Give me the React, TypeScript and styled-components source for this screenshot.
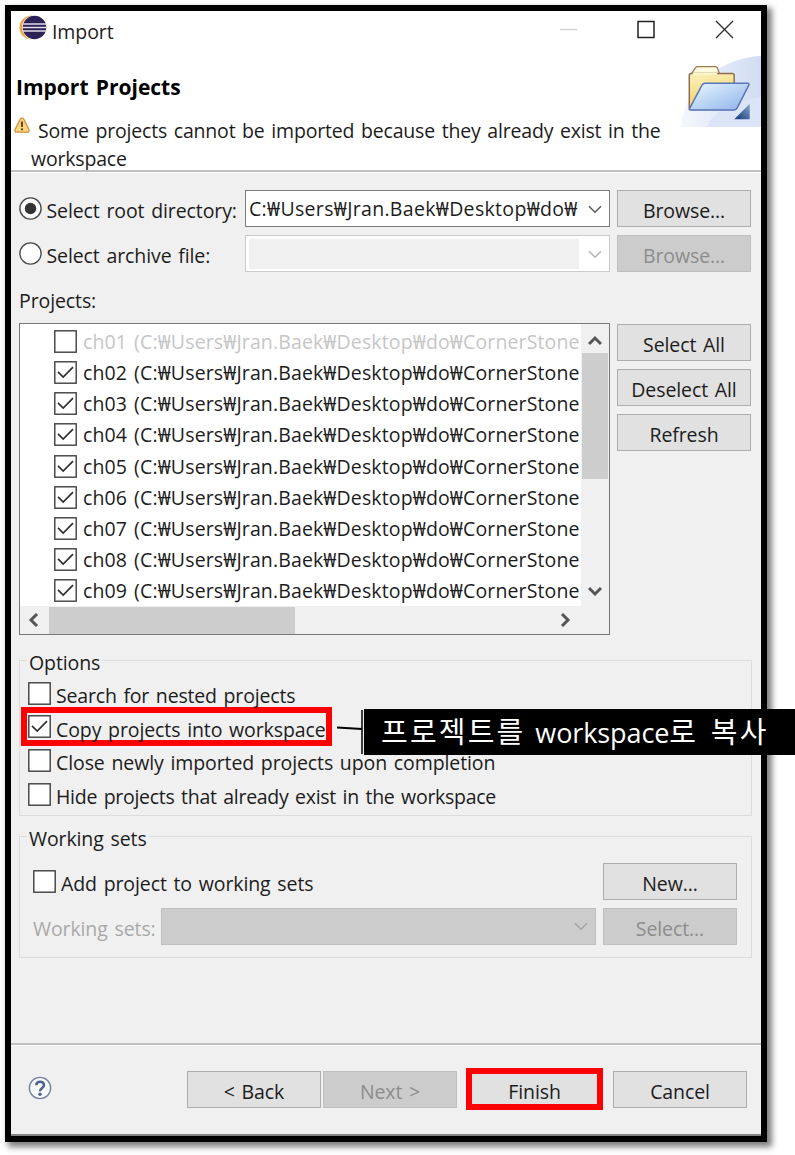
import React from 'react';
import styled, { createGlobalStyle, css } from 'styled-components';

const GlobalStyle = createGlobalStyle`
  *, *::before, *::after { box-sizing: border-box; }
  html, body { margin: 0; padding: 0; background: #fff; overflow: hidden; }
  body {
    font-family: "Open Sans", "Noto Sans", "Noto Sans CJK KR", sans-serif;
    font-size: 19.5px;
    line-height: 28px;
    color: #1c1c1c;
    letter-spacing: -0.1px;
    word-spacing: 1.8px;
  }
`;

const Page = styled.main`
  position: relative;
  width: 795px;
  height: 1155px;
  padding: 5px 0 0 5px;
  overflow: hidden;
`;

const Frame = styled.section`
  width: 762px;
  height: 1137px;
  border: 6px solid #000;
  background: #f0f0f0;
  box-shadow: 4px 4px 6px 1px rgba(0, 0, 0, 0.5);
  display: flex;
  flex-direction: column;
`;

const TitleBar = styled.header`
  height: 42px;
  flex: none;
  display: flex;
  align-items: flex-start;
  background: #fff;
  padding: 4px 27px 0 8px;
`;

const Title = styled.span`
  margin: 3px auto 0 5px;
`;

const WindowControls = styled.div`
  display: flex;
  gap: 60px;
  padding-top: 5px;
`;

const Banner = styled.div`
  height: 117px;
  flex: none;
  display: flex;
  justify-content: space-between;
  background: #fff;
`;

const BannerText = styled.div`
  padding: 20px 0 0 3px;
`;

const Heading = styled.h1`
  margin: 0 0 0 2px;
  font-size: 21px;
  line-height: 28px;
  font-weight: 700;
  color: #000;
  letter-spacing: 0;
`;

const Message = styled.p`
  margin: 16px 0 0;
  display: flex;
  letter-spacing: -0.18px;
`;

const MessageText = styled.span`
  text-indent: 7px;
  width: 650px;
`;

const Divider = styled.hr`
  flex: none;
  height: 3px;
  margin: 0;
  border: 0;
  border-top: 2px solid #c0c0c0;
  background: #fff;
`;

const Body = styled.div`
  height: 870px;
  flex: none;
  padding: 17px 9px 0 8px;
`;

const SourceRow = styled.div`
  display: grid;
  grid-template-columns: 226px 365px 134px;
  column-gap: 0;
  height: 37px;
  margin-bottom: 8px;
  & > :last-child { margin-left: 7px; }
`;

const RadioLabel = styled.div`
  display: flex;
  align-items: flex-start;
  gap: 5px;
  span { padding-top: 7px; white-space: nowrap; }
  svg { margin: 7px 0 0 -0.5px; }
`;

const Combo = styled.div<{ $off?: boolean }>`
  display: flex;
  align-items: center;
  justify-content: space-between;
  height: 37px;
  border: 1px solid ${p => (p.$off ? '#cbcbcb' : '#7c7c7c')};
  background: #fff;
  padding: 3px 7px 2px 3px;
  letter-spacing: 0.32px;
  white-space: nowrap;
`;

const ComboField = styled.span`
  flex: 1;
  align-self: stretch;
  margin-right: 9px;
  background: #f0f0f0;
`;

const Button = styled.button<{ $off?: boolean; $marked?: boolean }>`
  width: 134px;
  height: 37px;
  flex: none;
  font: inherit;
  letter-spacing: inherit;
  word-spacing: inherit;
  white-space: nowrap;
  padding: 4px 0 0;
  line-height: 28px;
  color: ${p => (p.$off ? '#8d8d8d' : '#1c1c1c')};
  background: ${p => (p.$off ? '#cccccc' : '#e1e1e1')};
  border: 1px solid ${p => (p.$off ? '#bfbfbf' : '#adadad')};
  ${p =>
    p.$marked &&
    css`
      width: 137px;
      height: 42px;
      border: 6px solid #ff0000;
      padding-top: 4px;
    `}
`;

const FieldLabel = styled.div`
  height: 28px;
  margin: 15px 0 8px;
`;

const ProjectsArea = styled.div`
  display: flex;
  gap: 7px;
  height: 312px;
`;

const ListBox = styled.div`
  width: 591px;
  height: 312px;
  border: 1px solid #777;
  background: #f0f0f0;
  display: grid;
  grid-template-columns: 561px 1fr;
  grid-template-rows: 282px 1fr;
`;

const ListItems = styled.ul`
  list-style: none;
  margin: 0;
  padding: 2px 0 0 34px;
  background: #fff;
  overflow: hidden;
`;

const ListItem = styled.li<{ $off?: boolean }>`
  display: flex;
  gap: 6px;
  height: 31.15px;
  white-space: nowrap;
  color: ${p => (p.$off ? '#c6c6c6' : '#1c1c1c')};
  letter-spacing: 0.13px;
  svg { margin-top: 4px; flex: none; }
  span { padding-top: 2px; }
`;

const VScroll = styled.div`
  display: flex;
  flex-direction: column;
  align-items: center;
  svg { margin: 10px 0 5px; flex: none; }
`;

const VThumb = styled.div`
  flex: none;
  width: 26px;
  height: 126px;
  margin-bottom: 95px;
  background: #cdcdcd;
`;

const HScroll = styled.div`
  display: flex;
  align-items: center;
  justify-content: space-between;
  padding: 0 9px 0 7px;
`;

const HThumb = styled.div`
  width: 246px;
  height: 27px;
  margin: 0 auto 0 8px;
  background: #cdcdcd;
`;

const SideButtons = styled.div`
  display: flex;
  flex-direction: column;
  gap: 8px;
  padding-top: 1px;
`;

const Group = styled.fieldset<{ $height: number; $top: number }>`
  min-width: 0;
  width: 733px;
  height: ${p => p.$height}px;
  margin: ${p => p.$top}px 0 0;
  padding: 0 0 0 8px;
  border: 1px solid #dcdcdc;
`;

const Legend = styled.legend`
  margin-left: -1px;
  padding: 0 2px;
  height: 28px;
  line-height: 34px;
`;

const OptionList = styled.div`
  padding-top: 8px;
`;

const CheckRow = styled.label<{ $red?: boolean; $tracking?: number }>`
  display: flex;
  gap: 5px;
  height: 33.5px;
  white-space: nowrap;
  letter-spacing: ${p => p.$tracking ?? -0.1}px;
  svg { flex: none; }
  ${p =>
    p.$red &&
    css`
      width: 311px;
      height: 39px;
      margin: -9px 0 3.5px -7px;
      padding: 1px 0 0 1px;
      border: 6px solid #ff0000;
      svg { margin-top: 1px; }
      span { margin-top: 2px; }
    `}
`;

const SetGrid = styled.div`
  display: grid;
  grid-template-columns: 128px 442px 134px;
  grid-template-rows: 37px 37px;
  row-gap: 8px;
  padding: 13px 0 0 5px;
`;

const AddSet = styled.div`
  grid-column: 1 / 3;
  display: flex;
  gap: 5px;
  svg { margin-top: 7px; }
  span { padding-top: 7px; }
`;

const SetLabel = styled.span`
  padding-top: 7px;
  color: #a9a9a9;
  white-space: nowrap;
`;

const SetCombo = styled.div`
  margin-right: 7px;
  display: flex;
  align-items: center;
  justify-content: flex-end;
  padding-right: 7px;
  border: 1px solid #bfbfbf;
  background: #cccccc;
`;

const Footer = styled.footer`
  flex: 1;
  display: flex;
  align-items: flex-start;
  padding: 25px 14px 0 17px;
  border-bottom: 2px solid #858585;
`;

const HelpSlot = styled.div`
  width: 159px;
  padding-top: 5px;
`;

const ButtonRow = styled.div`
  display: flex;
  gap: 2px;
  & > :nth-child(3) { margin: -3px 8px 0 7px; }
`;

const Callout = styled.aside`
  position: absolute;
  left: 337px;
  top: 709px;
  display: flex;
`;

const CalloutText = styled.div`
  width: 431px;
  height: 46px;
  padding: 4px 0 0 17px;
  background: #000;
  color: #fff;
  font-size: 27px;
  line-height: 40px;
  letter-spacing: -0.1px;
  word-spacing: 3px;
  white-space: nowrap;
`;

const Hangul = styled.span`
  font-family: "Noto Sans CJK KR", sans-serif;
  font-size: 29px;
  font-weight: 400;
  letter-spacing: 2.2px;
  word-spacing: 4px;
  line-height: 30px;
`;

const EclipseIcon = () => (
  <svg width="28" height="27" viewBox="0 0 28 27">
    <circle cx="12.5" cy="12.5" r="12" fill="#f7a13c" />
    <circle cx="15.8" cy="12.5" r="12.6" fill="#fff" />
    <circle cx="15.5" cy="12.5" r="11.8" fill="#2c2255" />
    <path d="M3.5 9h24M3 12.5h25M3.5 16h24" stroke="#dedbea" strokeWidth="1.5" />
  </svg>
);

const WarningIcon = () => (
  <svg width="17" height="18" viewBox="0 0 17 18">
    <path d="M8 0.8c1 0 1.5.8 2 1.8l4.8 9.6c.8 1.7 0 3-1.6 3H2.8c-1.6 0-2.4-1.3-1.6-3L6 2.6c.5-1 1-1.8 2-1.8z" fill="#fbd77c" stroke="#cf9440" strokeWidth="1.3" />
    <path d="M8 4.5v5.5" stroke="#4f3d1d" strokeWidth="1.8" />
    <circle cx="8" cy="12.3" r="1.1" fill="#4f3d1d" />
  </svg>
);

const FolderArt = () => (
  <svg width="82" height="75" viewBox="0 0 82 75">
    <defs>
      <linearGradient id="glow" x1="0" x2="1"><stop offset="0" stopColor="#f4f7fd" /><stop offset="1" stopColor="#d0dcf3" /></linearGradient>
      <linearGradient id="back" x1="0" y1="0" x2="0.3" y2="1"><stop offset="0" stopColor="#fcf3c0" /><stop offset="1" stopColor="#f0cf64" /></linearGradient>
      <linearGradient id="front" x1="0" y1="0" x2="1" y2="1"><stop offset="0" stopColor="#e9f8ff" /><stop offset="1" stopColor="#8db1ea" /></linearGradient>
      <linearGradient id="corner" x1="0" y1="1" x2="1" y2="0"><stop offset="0.2" stopColor="#264a86" /><stop offset="1" stopColor="#8ba9d3" /></linearGradient>
    </defs>
    <path d="M0 75C4 34 36 6 82 2v73z" fill="url(#glow)" />
    <path d="M26 75C36 55 59 49 82 44v31z" fill="#dce5f7" />
    <path d="M10.5 20.5l4.5-6.5c.5-.8 1-1 2-1h18c1 0 1.7.3 2.2 1l2.3 6.5" fill="#fffbe0" stroke="#9a7a52" strokeWidth="1.3" />
    <path d="M8.5 22V57h46V22c0-1.3-.7-2-2-2h-42c-1.3 0-2 .7-2 2z" fill="url(#back)" stroke="#8d6c4b" strokeWidth="1.5" strokeLinejoin="round" />
    <path d="M12 20.5h25" stroke="#fff7cc" strokeWidth="2" />
    <path d="M24.500 30h44c1 0 1.500 1 1 2L57.500 55.500c-.6 1.500-1.500 2-3 2H10c-1 0-1.500-1-1-2l12.500-23.500c.6-1.200 1.500-2 3-2z" fill="url(#front)" stroke="#5876b8" strokeWidth="1.5" />
    <path d="M70.5 51v16H54.500z" fill="url(#corner)" />
  </svg>
);

const Radio = ({ on }: { on?: boolean }) => (
  <svg width="23" height="23" viewBox="0 0 23 23">
    <circle cx="11.5" cy="11.5" r="10.6" fill="#fff" stroke="#4a4a4a" strokeWidth="1.4" />
    {on && <circle cx="11.5" cy="11.5" r="5.7" fill="#333" />}
  </svg>
);

const Check = ({ on }: { on?: boolean }) => (
  <svg width="23" height="23" viewBox="0 0 23 23">
    <rect x="0.8" y="0.8" width="21.4" height="21.4" fill="#fff" stroke="#3f3f3f" strokeWidth="1.4" />
    {on && <path d="M4 10.8l5.2 5.2L19 6.2" fill="none" stroke="#2f2f2f" strokeWidth="1.7" />}
  </svg>
);

const DropArrow = ({ color = '#5a5a5a' }: { color?: string }) => (
  <svg width="14" height="9" viewBox="0 0 14 9"><path d="M1 1.2l6 6 6-6" fill="none" stroke={color} strokeWidth="1.5" /></svg>
);

const ScrollArrow = ({ turn }: { turn: number }) => (
  <svg width="14" height="14" viewBox="0 0 14 14">
    <path transform={`rotate(${turn} 7 7)`} d="M1 10l6-6 6 6" fill="none" stroke="#555" strokeWidth="3" />
  </svg>
);

const HelpIcon = () => (
  <svg width="24" height="24" viewBox="0 0 24 24">
    <circle cx="12" cy="12" r="10.7" fill="#f7f9fc" stroke="#70819f" strokeWidth="1.3" />
    <path d="M8.3 9.2C8.3 4.5 16 4.8 16 9c0 3-4 3.3-4 6.2" fill="none" stroke="#4b628c" strokeWidth="2.6" />
    <circle cx="12" cy="18.3" r="1.7" fill="#4b628c" />
  </svg>
);

const projects = ['ch01', 'ch02', 'ch03', 'ch04', 'ch05', 'ch06', 'ch07', 'ch08', 'ch09'];

export default function App() {
  return (
    <Page>
      <GlobalStyle />
      <Frame>
        <TitleBar>
          <EclipseIcon />
          <Title>Import</Title>
          <WindowControls>
            <svg width="18" height="19" viewBox="0 0 18 19"><path d="M1 9.5h17" stroke="#cfcfcf" strokeWidth="1.3" /></svg>
            <svg width="18" height="19" viewBox="0 0 18 19"><rect x="1" y="1.5" width="16" height="16" fill="none" stroke="#222" strokeWidth="1.5" /></svg>
            <svg width="19" height="19" viewBox="0 0 19 19"><path d="M1 1l17 17M18 1l-17 17" stroke="#333" strokeWidth="1.4" /></svg>
          </WindowControls>
        </TitleBar>
        <Banner>
          <BannerText>
            <Heading>Import Projects</Heading>
            <Message>
              <WarningIcon />
              <MessageText>
                Some projects cannot be imported because they already exist in the<br />workspace
              </MessageText>
            </Message>
          </BannerText>
          <FolderArt />
        </Banner>
        <Divider />
        <Body>
          <SourceRow>
            <RadioLabel><Radio on /><span>Select root directory:</span></RadioLabel>
            <Combo>C:₩Users₩Jran.Baek₩Desktop₩do₩<DropArrow /></Combo>
            <Button>Browse...</Button>
          </SourceRow>
          <SourceRow>
            <RadioLabel><Radio /><span>Select archive file:</span></RadioLabel>
            <Combo $off><ComboField /><DropArrow color="#b5b5b5" /></Combo>
            <Button $off>Browse...</Button>
          </SourceRow>
          <FieldLabel>Projects:</FieldLabel>
          <ProjectsArea>
            <ListBox>
              <ListItems>
                {projects.map((name, i) => (
                  <ListItem key={name} $off={i === 0}>
                    <Check on={i > 0} />
                    <span>{name} (C:₩Users₩Jran.Baek₩Desktop₩do₩CornerStone</span>
                  </ListItem>
                ))}
              </ListItems>
              <VScroll>
                <ScrollArrow turn={0} />
                <VThumb />
                <ScrollArrow turn={180} />
              </VScroll>
              <HScroll>
                <ScrollArrow turn={-90} />
                <HThumb />
                <ScrollArrow turn={90} />
              </HScroll>
            </ListBox>
            <SideButtons>
              <Button>Select All</Button>
              <Button>Deselect All</Button>
              <Button>Refresh</Button>
            </SideButtons>
          </ProjectsArea>
          <Group $height={170} $top={11}>
            <Legend>Options</Legend>
            <OptionList>
              <CheckRow $tracking={-0.17}><Check /><span>Search for nested projects</span></CheckRow>
              <CheckRow $red><Check on /><span>Copy projects into workspace</span></CheckRow>
              <CheckRow><Check /><span>Close newly imported projects upon completion</span></CheckRow>
              <CheckRow $tracking={-0.28}><Check /><span>Hide projects that already exist in the workspace</span></CheckRow>
            </OptionList>
          </Group>
          <Group $height={136} $top={6}>
            <Legend>Working sets</Legend>
            <SetGrid>
              <AddSet><Check /><span>Add project to working sets</span></AddSet>
              <Button>New...</Button>
              <SetLabel>Working sets:</SetLabel>
              <SetCombo><DropArrow color="#a5a5a5" /></SetCombo>
              <Button $off>Select...</Button>
            </SetGrid>
          </Group>
        </Body>
        <Divider />
        <Footer>
          <HelpSlot><HelpIcon /></HelpSlot>
          <ButtonRow>
            <Button>&lt; Back</Button>
            <Button $off>Next &gt;</Button>
            <Button $marked>Finish</Button>
            <Button>Cancel</Button>
          </ButtonRow>
        </Footer>
      </Frame>
      <Callout>
        <svg width="27" height="46" viewBox="0 0 27 46">
          <path d="M0 18.5L25 20" stroke="#000" strokeWidth="2" />
          <path d="M25 1v44" stroke="#000" strokeWidth="1.5" />
        </svg>
        <CalloutText><Hangul>프로젝트를</Hangul> workspace<Hangul>로 복사</Hangul></CalloutText>
      </Callout>
    </Page>
  );
}
